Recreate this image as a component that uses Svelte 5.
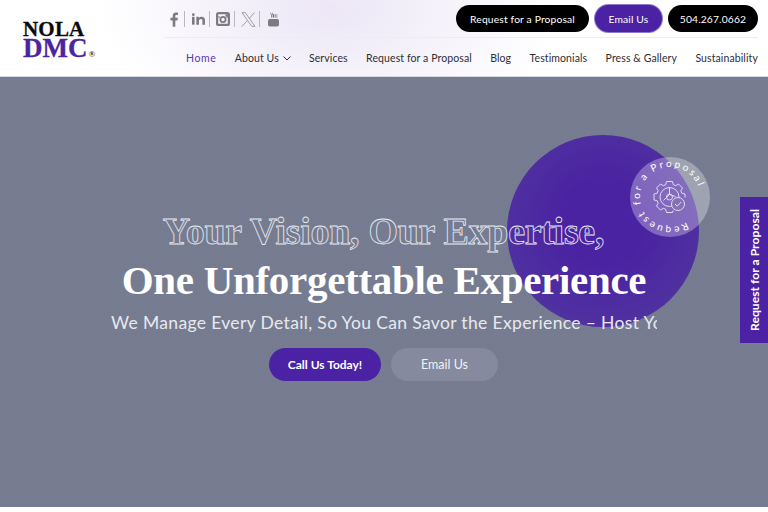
<script lang="ts">
  const nav = ['Home', 'About Us', 'Services', 'Request for a Proposal', 'Blog', 'Testimonials', 'Press & Gallery', 'Sustainability'];
</script>

<header class="site-header">
  <a class="logo" href="#top">
    <span class="logo-top">NOLA</span>
    <span class="logo-bottom">DMC<sup>®</sup></span>
  </a>

  <div class="header-right">
    <div class="top-row">
      <div class="socials">
        <span class="social">
          <svg width="9" height="15" viewBox="0 0 10 16" fill="currentColor"><path d="M3 16V9H.5V6H3V4C3 1.5 4.500.2 6.600.2c1 0 1.900.1 2.200.1v2.600H7.300C6.100 2.900 5.900 3.500 5.900 4.300V6h2.800l-.4 3H5.900v7z"/></svg>
        </span>
        <span class="social">
          <svg width="13" height="12" viewBox="0 0 15 13" fill="currentColor"><rect x="0" y="4" width="3" height="9"/><circle cx="1.500" cy="1.500" r="1.600"/><path d="M5 4h2.900v1.300C8.400 4.500 9.500 3.800 11 3.800c3 0 4 1.800 4 4.500V13h-3V8.800c0-1.200-.3-2.300-1.600-2.300S8 7.600 8 8.800V13H5z"/></svg>
        </span>
        <span class="social">
          <svg width="14" height="14" viewBox="0 0 14 14" fill="none" stroke="currentColor" stroke-width="2.200"><rect x="1.100" y="1.100" width="11.800" height="11.800" rx="1.500"/><circle cx="7" cy="7.500" r="2.600" stroke-width="1.800"/><path d="M9.500 2.200h2.400v2.400H9.500z" fill="currentColor" stroke="none"/><path d="M1 5h3M10 5h3" stroke-width="1.200"/></svg>
        </span>
        <span class="social faint">
          <svg width="15" height="15" viewBox="0 0 15 15" fill="none" stroke="currentColor" stroke-width="1"><path d="M1 .7h3.300l9.700 13.600h-3.300zM13.500.5 8.300 6.600M6.300 8.800.8 14.500"/></svg>
        </span>
        <span class="social last">
          <svg width="11" height="15" viewBox="0 0 12 15" fill="currentColor"><path d="M3 0l.9 2.200L4.800 0h.8L4.300 3v2.600h-.8V3L2.200 0zM6 1.500c.7 0 1 .4 1 1v2c0 .7-.4 1.100-1 1.100s-1-.4-1-1.100v-2c0-.6.3-1 1-1zm2 .1h.7v3c0 .2.300.2.700-.2V1.600h.7v3.900h-.7V5c-.7.800-1.400.7-1.400-.2z"/><rect x="0" y="7" width="12" height="8" rx="2"/></svg>
        </span>
      </div>
      <div class="actions">
        <button class="pill black wide">Request for a Proposal</button>
        <button class="pill purple">Email Us</button>
        <button class="pill black phone">504.267.0662</button>
      </div>
    </div>

    <nav class="main-nav">
      {#each nav as item, i}
        <span class="nav-item" class:active={i === 0}>
          {item}
          {#if item === 'About Us'}
            <svg width="8" height="5" viewBox="0 0 8 5" fill="none" stroke="currentColor" stroke-width="1"><path d="M.5.500 4 4 7.500.500"/></svg>
          {/if}
        </span>
      {/each}
    </nav>
  </div>
</header>

<main class="hero">
  <div class="circle"></div>

  <div class="badge">
    <svg width="80" height="80" viewBox="0 0 80 80">
      <defs>
        <path id="badge-ring" d="M40 70a30 30 0 1 1 0-60a30 30 0 1 1 0 60" transform="rotate(-33 40 40)" />
      </defs>
      <text class="badge-text"><textPath href="#badge-ring">Request for a Proposal</textPath></text>
      <g fill="none" stroke="#e2daf0" stroke-width="1">
        <path d="M36.500 24.500h6l.8 3.200 2.400 1 2.800-1.700 4 4-1.700 2.800 1 2.400 3.200.8v3.500M36.500 24.500l-.8 3.200-2.400 1-2.800-1.700-4 4 1.700 2.800-1 2.400-3.200.8v6l3.200.8 1 2.400-1.700 2.800 4 4 2.800-1.700 2.400 1 .8 3.200h6l.6-2"/>
        <circle cx="39.500" cy="40" r="9.500"/>
        <path d="M39.500 30.500v7M39.500 37.500l-6 6M39.500 37.500l6 2"/>
        <circle cx="39.500" cy="40" r="3"/>
        <circle cx="48" cy="47" r="6.500" fill="#8470b5"/>
        <path d="m45 47 2.200 2.200 4-4.200"/>
      </g>
    </svg>
  </div>

  <div class="hero-content">
    <h1 class="line-outline">Your Vision, Our Expertise,</h1>
    <h2 class="line-solid">One Unforgettable Experience</h2>
    <div class="sub-clip">
      <p>We Manage Every Detail, So You Can Savor the Experience – Host Your Event</p>
    </div>
    <div class="hero-buttons">
      <button class="cta primary">Call Us Today!</button>
      <button class="cta ghost">Email Us</button>
    </div>
  </div>

  <a class="side-tab" href="#rfp"><span>Request for a Proposal</span></a>
</main>

<style>
  :global(body) {
    margin: 0;
    background: #fff;
    font-family: "Lato", "Liberation Sans", sans-serif;
    overflow: hidden;
  }

  .site-header {
    height: 77px;
    display: flex;
    box-sizing: border-box;
    padding: 0 10px 0 23px;
    gap: 69px;
    background:
      radial-gradient(ellipse 230px 130px at 330px 10px, #ece6f6 0%, rgba(236, 230, 246, 0) 100%),
      #fff;
    border-bottom: 1px solid #d7d9e2;
  }

  .logo {
    width: 72px;
    flex-shrink: 0;
    padding-top: 21px;
    display: flex;
    flex-direction: column;
    text-decoration: none;
    font-family: "Liberation Serif", serif;
    font-weight: 700;
  }

  .logo-top {
    color: #0a0a0a;
    font-size: 21px;
    line-height: 17px;
    letter-spacing: 0.2px;
    -webkit-text-stroke: 0.3px #0a0a0a;
  }

  .logo-bottom {
    color: #4b25a0;
    font-size: 27px;
    line-height: 21px;
    white-space: nowrap;
    -webkit-text-stroke: 0.3px #4b25a0;
  }

  .logo-bottom sup {
    font-size: 9px;
    color: #333;
    vertical-align: baseline;
    -webkit-text-stroke: 0;
    margin-left: 1px;
  }

  .header-right {
    flex: 1;
    min-width: 0;
    display: flex;
    flex-direction: column;
  }

  .top-row {
    height: 38px;
    box-sizing: border-box;
    padding-top: 5px;
    display: flex;
    border-bottom: 1px solid #eeebf3;
  }

  .socials {
    display: flex;
    align-items: flex-start;
    height: 28px;
    color: #7c7c80;
  }

  .social {
    width: 25px;
    height: 16px;
    margin-top: 6px;
    box-sizing: border-box;
    padding-left: 2px;
    display: flex;
    align-items: center;
    justify-content: center;
    border-right: 1px solid #b9b7bf;
  }

  .social:first-child {
    width: 21px;
    padding-left: 0;
  }

  .social.faint {
    color: #9c9ca3;
  }

  .social.last {
    border-right: none;
  }

  .actions {
    display: flex;
    gap: 6px;
    height: 27px;
    margin-left: auto;
  }

  .pill {
    height: 27px;
    border: none;
    border-radius: 14px;
    padding: 0;
    color: #fff;
    font-family: inherit;
    font-size: 10.300px;
    letter-spacing: 0.15px;
    white-space: nowrap;
  }

  .pill.black {
    background: #000;
  }

  .pill.wide {
    width: 133px;
  }

  .pill.purple {
    background: #4a22a3;
    box-shadow: 0 0 0 1px #8d7ad0;
    width: 67px;
  }

  .pill.phone {
    width: 90px;
  }

  .main-nav {
    display: flex;
    justify-content: space-between;
    padding: 13px 0 0 22px;
    font-size: 10.500px;
    line-height: 14px;
    color: #2e2e33;
    letter-spacing: 0.1px;
  }

  .nav-item {
    white-space: nowrap;
  }

  .nav-item.active {
    color: #5b36ad;
    letter-spacing: 0.6px;
  }

  .nav-item svg {
    margin-left: 1px;
    vertical-align: 1px;
  }

  .hero {
    position: relative;
    height: 430px;
    overflow: hidden;
    background-color: #757c91;
    background-image: radial-gradient(#7a7d8b 0.6px, transparent 0.8px);
    background-size: 4px 4px;
  }

  .circle {
    position: absolute;
    left: 507px;
    top: 58px;
    width: 192px;
    height: 192px;
    border-radius: 50%;
    background: radial-gradient(circle at 50% 45%, #4a23a2 30%, #533a9e 100%);
  }

  .badge {
    position: absolute;
    left: 630px;
    top: 80px;
    width: 80px;
    height: 80px;
    border-radius: 50%;
    background: rgba(255, 255, 255, 0.3);
  }

  .badge-text {
    font-size: 10px;
    letter-spacing: 2.300px;
    fill: #fff;
    font-family: "Lato", sans-serif;
  }

  .hero-content {
    position: relative;
    display: flex;
    flex-direction: column;
    align-items: center;
    padding-top: 131px;
  }

  h1,
  h2 {
    margin: 0;
    font-family: "Liberation Serif", serif;
    white-space: nowrap;
  }

  .line-outline {
    font-size: 38px;
    line-height: 46px;
    font-weight: 700;
    letter-spacing: -0.3px;
    color: transparent;
    -webkit-text-stroke: 0.8px #e8ebf2;
    margin-right: 1px;
  }

  .line-solid {
    margin-top: 2px;
    font-size: 41px;
    line-height: 48px;
    font-weight: 700;
    letter-spacing: -0.3px;
    color: #fff;
  }

  .sub-clip {
    width: 546px;
    margin-top: 8px;
    overflow: hidden;
    color: #e7e9ef;
    font-size: 17.500px;
    line-height: 22px;
    letter-spacing: 0.35px;
    white-space: nowrap;
  }

  .sub-clip p {
    margin: 0;
  }

  .hero-buttons {
    display: flex;
    gap: 10px;
    margin-top: 14px;
    margin-right: 1px;
  }

  .cta {
    height: 33px;
    border-radius: 17px;
    border: none;
    color: #fff;
    font-family: inherit;
    font-size: 12.500px;
  }

  .cta.primary {
    width: 112px;
    background: #4a22a3;
    font-weight: 700;
    font-size: 12px;
  }

  .cta.ghost {
    width: 107px;
    background: #858a9f;
    color: #f1f2f6;
  }

  .side-tab {
    position: absolute;
    right: 0;
    top: 120px;
    width: 28px;
    height: 146px;
    display: flex;
    align-items: center;
    justify-content: center;
    background: #4a22a3;
    color: #fff;
    text-decoration: none;
  }

  .side-tab span {
    writing-mode: vertical-rl;
    transform: rotate(180deg);
    font-size: 12.200px;
    font-weight: 700;
    white-space: nowrap;
  }
</style>
